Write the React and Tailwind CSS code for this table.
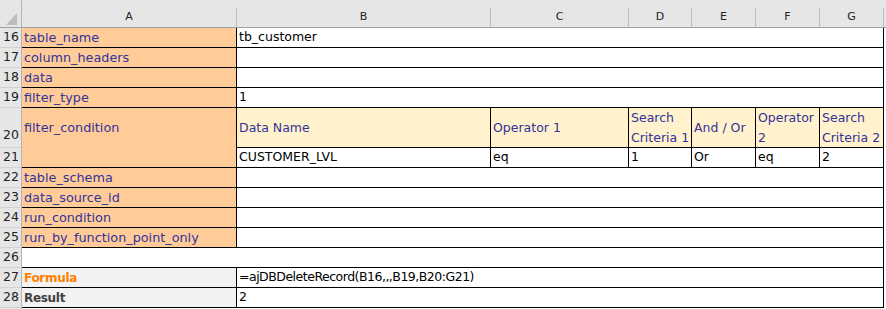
const cols = ['A', 'B', 'C', 'D', 'E', 'F', 'G'];

const font = { fontFamily: '"DejaVu Sans", Verdana, sans-serif' };

const RowNum = ({ n, tall }) => (
  <div
    className={`bg-[#e6e6e6] border-r border-b border-r-[#b4b4b4] border-b-[#d2d2d2] text-[12.5px] text-[#222] pl-[3px] flex ${
      tall ? 'h-[40px] items-end pb-[2px]' : 'h-[20px] items-center'
    }`}
  >
    {n}
  </div>
);

const Label = ({ children }) => (
  <div className="h-[20px] bg-[#ffcc99] border-r border-b border-black text-[#333399] text-[12.8px] pl-[2px] flex items-center whitespace-nowrap">
    {children}
  </div>
);

const Wide = ({ children, tight }) => (
  <div
    className={`col-span-6 h-[20px] bg-white border-r border-b border-black text-[12.5px] text-black pl-[2px] flex items-center whitespace-nowrap ${
      tight ? 'tracking-[-0.5px]' : ''
    }`}
  >
    {children}
  </div>
);

const Rest = ({ h = 'h-[20px]' }) => <div className={`${h} bg-white`} />;

const simpleRows = [
  [16, 'table_name', 'tb_customer'],
  [17, 'column_headers', ''],
  [18, 'data', ''],
  [19, 'filter_type', '1'],
];

const lowerRows = [
  [22, 'table_schema'],
  [23, 'data_source_id'],
  [24, 'run_condition'],
  [25, 'run_by_function_point_only'],
];

const headers20 = ['Data Name', 'Operator 1', 'Search Criteria 1', 'And / Or', 'Operator 2', 'Search Criteria 2'];
const values21 = ['CUSTOMER_LVL', 'eq', '1', 'Or', 'eq', '2'];

export default function App() {
  return (
    <div className="w-[886px] h-[309px] overflow-hidden bg-white" style={font}>
      <div className="grid grid-cols-[22px_215px_254px_138px_63px_64px_64px_64px_1fr]">
        {/* column header row */}
        <div className="h-[28px] bg-[#e6e6e6] border-r border-b border-r-[#b4b4b4] border-b-[#a0a0a0] flex items-end justify-end pr-[3px] pb-[2px]">
          <svg width="12" height="12" viewBox="0 0 12 12">
            <polygon points="11,0 11,12 0,12" fill="#bdbdbd" />
          </svg>
        </div>
        {cols.map((c) => (
          <div key={c} className="h-[28px] bg-[#e6e6e6] border-b border-[#a0a0a0] flex flex-col">
            <div className="h-[8px]" />
            <div className="flex-1 border-r border-[#bdbdbd] flex items-center justify-center text-[11px] text-[#222]">
              {c}
            </div>
          </div>
        ))}
        <div className="h-[28px] bg-[#e6e6e6] border-b border-[#a0a0a0]" />

        {simpleRows.map(([n, label, val]) => (
          <div key={n} className="contents">
            <RowNum n={n} />
            <Label>{label}</Label>
            <Wide>{val}</Wide>
            <Rest />
          </div>
        ))}

        {/* row 20 */}
        <RowNum n={20} tall />
        <div className="h-[40px] bg-[#ffcc99] border-r border-black text-[#333399] text-[12.8px] pl-[2px] flex items-center">
          filter_condition
        </div>
        {headers20.map((h) => (
          <div
            key={h}
            className="h-[40px] bg-[#fff2cc] border-r border-b border-black text-[#333399] text-[12.5px] leading-[20px] pl-[2px] flex items-center"
          >
            {h}
          </div>
        ))}
        <Rest h="h-[40px]" />

        {/* row 21 */}
        <RowNum n={21} />
        <div className="h-[20px] bg-[#ffcc99] border-r border-b border-black" />
        {values21.map((v, i) => (
          <div
            key={i}
            className="h-[20px] bg-white border-r border-b border-black text-[12.5px] text-black pl-[2px] flex items-center whitespace-nowrap"
          >
            {v}
          </div>
        ))}
        <Rest />

        {lowerRows.map(([n, label]) => (
          <div key={n} className="contents">
            <RowNum n={n} />
            <Label>{label}</Label>
            <Wide />
            <Rest />
          </div>
        ))}

        {/* row 26 */}
        <RowNum n={26} />
        <div className="col-span-7 h-[20px] bg-white border-r border-b border-black" />
        <Rest />

        {/* row 27 */}
        <RowNum n={27} />
        <div className="h-[20px] bg-[#f2f2f2] border-r border-b border-black text-[12px] font-bold text-[#ff8000] pl-[2px] flex items-center tracking-[-0.3px]">
          Formula
        </div>
        <Wide tight>=ajDBDeleteRecord(B16,,,B19,B20:G21)</Wide>
        <Rest />

        {/* row 28 */}
        <RowNum n={28} />
        <div className="h-[20px] bg-[#f2f2f2] border-r border-b border-black text-[12px] font-bold text-[#404040] pl-[2px] flex items-center tracking-[-0.3px]">
          Result
        </div>
        <Wide>2</Wide>
        <Rest />

        {/* row 29 (cut off) */}
        <div className="h-[20px] bg-[#e6e6e6] border-r border-[#b4b4b4]" />
        <div className="col-span-8 h-[20px] bg-white" />
      </div>
    </div>
  );
}
